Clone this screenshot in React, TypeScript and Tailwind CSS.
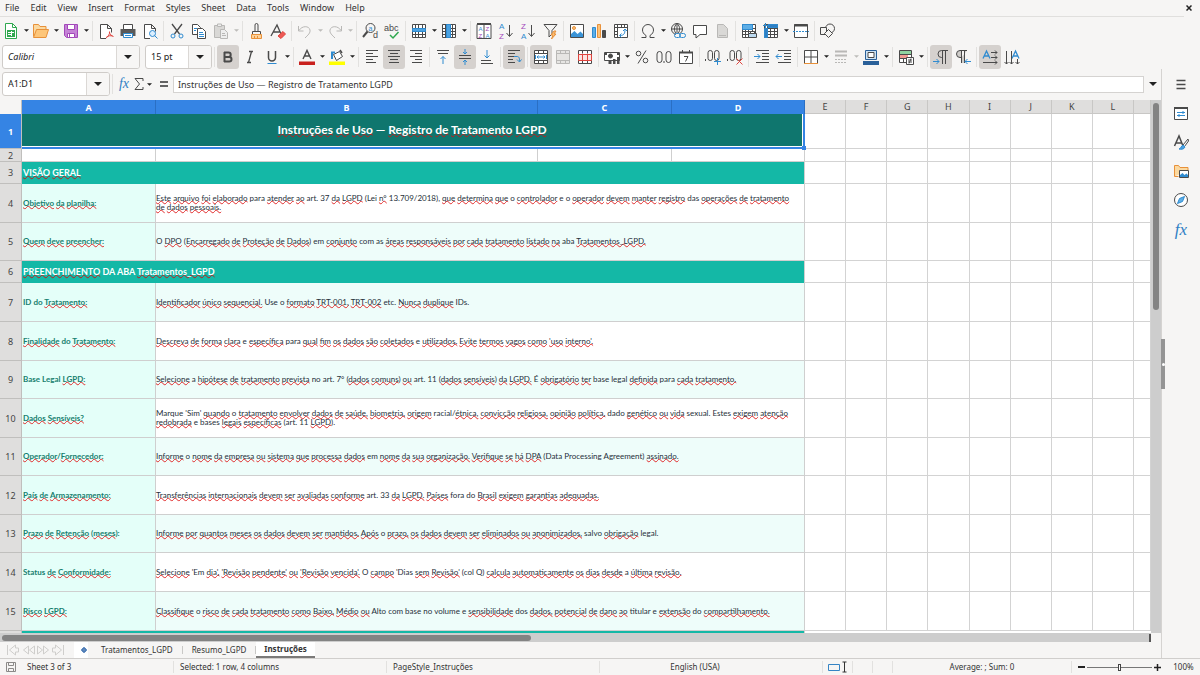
import type { ReactNode } from "react";

interface SheetRow {
  n: number;
  kind: "title" | "blank" | "section" | "entry";
  height: string;
  label?: string;
  text?: string;
  tinted?: boolean;
}

const TALL = "h-[39px]";
const SHORT = "h-[38px]";

const ROWS: SheetRow[] = [
  { n: 1, kind: "title", height: "h-[35px]", label: "Instruções de Uso — Registro de Tratamento LGPD" },
  { n: 2, kind: "blank", height: "h-[13px]" },
  { n: 3, kind: "section", height: "h-[22px]", label: "VISÃO GERAL" },
  {
    n: 4,
    kind: "entry",
    height: TALL,
    label: "Objetivo da planilha:",
    text: "Este arquivo foi elaborado para atender ao art. 37 da LGPD (Lei n° 13.709/2018), que determina que o controlador e o operador devem manter registro das operações de tratamento de dados pessoais.",
  },
  {
    n: 5,
    kind: "entry",
    height: SHORT,
    label: "Quem deve preencher:",
    text: "O DPO (Encarregado de Proteção de Dados) em conjunto com as áreas responsáveis por cada tratamento listado na aba Tratamentos_LGPD.",
    tinted: true,
  },
  { n: 6, kind: "section", height: "h-[22px]", label: "PREENCHIMENTO DA ABA Tratamentos_LGPD" },
  {
    n: 7,
    kind: "entry",
    height: TALL,
    label: "ID do Tratamento:",
    text: "Identificador único sequencial. Use o formato TRT-001, TRT-002 etc. Nunca duplique IDs.",
    tinted: true,
  },
  {
    n: 8,
    kind: "entry",
    height: TALL,
    label: "Finalidade do Tratamento:",
    text: "Descreva de forma clara e específica para qual fim os dados são coletados e utilizados. Evite termos vagos como 'uso interno'.",
  },
  {
    n: 9,
    kind: "entry",
    height: SHORT,
    label: "Base Legal LGPD:",
    text: "Selecione a hipótese de tratamento prevista no art. 7° (dados comuns) ou art. 11 (dados sensíveis) da LGPD. É obrigatório ter base legal definida para cada tratamento.",
    tinted: true,
  },
  {
    n: 10,
    kind: "entry",
    height: TALL,
    label: "Dados Sensíveis?",
    text: "Marque 'Sim' quando o tratamento envolver dados de saúde, biometria, origem racial/étnica, convicção religiosa, opinião política, dado genético ou vida sexual. Estes exigem atenção redobrada e bases legais específicas (art. 11 LGPD).",
  },
  {
    n: 11,
    kind: "entry",
    height: SHORT,
    label: "Operador/Fornecedor:",
    text: "Informe o nome da empresa ou sistema que processa dados em nome da sua organização. Verifique se há DPA (Data Processing Agreement) assinado.",
    tinted: true,
  },
  {
    n: 12,
    kind: "entry",
    height: TALL,
    label: "País de Armazenamento:",
    text: "Transferências internacionais devem ser avaliadas conforme art. 33 da LGPD. Países fora do Brasil exigem garantias adequadas.",
  },
  {
    n: 13,
    kind: "entry",
    height: SHORT,
    label: "Prazo de Retenção (meses):",
    text: "Informe por quantos meses os dados devem ser mantidos. Após o prazo, os dados devem ser eliminados ou anonimizados, salvo obrigação legal.",
    tinted: true,
  },
  {
    n: 14,
    kind: "entry",
    height: TALL,
    label: "Status de Conformidade:",
    text: "Selecione 'Em dia', 'Revisão pendente' ou 'Revisão vencida'. O campo 'Dias sem Revisão' (col Q) calcula automaticamente os dias desde a última revisão.",
  },
  {
    n: 15,
    kind: "entry",
    height: TALL,
    label: "Risco LGPD:",
    text: "Classifique o risco de cada tratamento como Baixo, Médio ou Alto com base no volume e sensibilidade dos dados, potencial de dano ao titular e extensão do compartilhamento.",
    tinted: true,
  },
];

const COLUMNS = ["A", "B", "C", "D", "E", "F", "G", "H", "I", "J", "K", "L", ""];
const MENUS = ["File", "Edit", "View", "Insert", "Format", "Styles", "Sheet", "Data", "Tools", "Window", "Help"];

// Words the English dictionary accepts; everything else gets a squiggle.
const KNOWN_WORDS = new Set(
  "para art 37 Lei 13.709/2018 o e O a em com as aba no do ID Base Legal Status Use etc IDs 7° 11 33 base legal racial dado sexual Estes bases Sim Marque Data Processing Agreement salvo Em DA ABA volume titular Alto fora das dos col Q Dias É —".split(" ")
);

function Spell({ text, onDark }: { text: string; onDark?: boolean }) {
  return (
    <>
      {text.split(/([\s()]+|\/(?=\D))/).map((part, i) => {
        const bare = part.replace(/^'|[.,:?']+$/g, "");
        if (!bare || /^[\s()/]+$/.test(bare) || KNOWN_WORDS.has(bare)) return part;
        return (
          <span
            key={i}
            className={`underline decoration-wavy decoration-1 [text-decoration-skip-ink:none] [text-underline-offset:-1px] ${
              onDark ? "decoration-[#c01c1c]" : "decoration-[#e02b2b]"
            }`}
          >
            {part}
          </span>
        );
      })}
    </>
  );
}

/* ---------- icons ---------- */

const INK = "#4a4a4a";
const BLUE = "#2f8bd0";
const PURPLE = "#a347ba";
const RED = "#e0443e";
const ORANGE = "#e8913a";
const GREEN = "#2fa84f";
const GREY = "#b9b8b6";

function Svg({ children }: { children: ReactNode }) {
  return (
    <svg viewBox="0 0 18 18" className="h-[18px] w-[18px] shrink-0" fill="none" stroke={INK} strokeWidth="1" aria-hidden="true">
      {children}
    </svg>
  );
}

function Glyph({ x, y, size, fill, children }: { x: number; y: number; size: number; fill: string; children: string }) {
  return (
    <text x={x} y={y} fontSize={size} fill={fill} stroke="none" fontFamily="Liberation Sans, sans-serif">
      {children}
    </text>
  );
}

function Lines({ rows, stroke = INK }: { rows: [number, number, number][]; stroke?: string }) {
  return <path stroke={stroke} d={rows.map(([x, y, w]) => `M${x} ${y}h${w}`).join("")} />;
}

const GRID = "M2.5 2.5h13v13h-13zM2.5 6.5h13M2.5 9.5h13M2.5 12.5h13M5.5 2.5v13M8.5 2.5v13M12.5 2.5v13";

const ICONS: Record<string, ReactNode> = {
  New: (
    <>
      <path stroke={GREEN} d="M3.5 1.5h7l4 4v11h-11z" fill="#fff" />
      <path stroke={GREEN} d="M10.5 1.5v4h4" />
      <path stroke="none" fill={GREEN} d="M5 8h8v7H5z" />
      <path stroke="#fff" d="M6 10.5h6M6 12.5h3M9.5 9v5" />
    </>
  ),
  Open: (
    <>
      <path stroke={ORANGE} fill="#fbd9a0" d="M1.5 14.5v-12h5l1.5 2h6v3" />
      <path stroke={ORANGE} fill="#fdc67a" d="M1.5 15.5L4.5 7.5h12l-2.5 8z" />
    </>
  ),
  Save: (
    <>
      <path stroke={PURPLE} fill="#c583d6" d="M2.5 2.5h13v13h-11l-2-2z" />
      <path stroke={PURPLE} fill="#fff" d="M5.5 2.5h7v5h-7zM5.5 11.5h7v4h-7z" />
      <path stroke={PURPLE} d="M7.5 12v3" />
    </>
  ),
  "Export as PDF": (
    <>
      <path fill="#fff" d="M9 16.5H3.5v-14h7l4 4v4M10.5 2.5v4h4" />
      <path stroke={RED} d="M9 16c2-1 4-4 3.5-6.5M12.5 10c0 2 2 4 4 4.5M9.5 15c2-1.5 4-1.5 6-1" />
    </>
  ),
  Print: (
    <>
      <path stroke="none" fill="#5a5a5a" d="M1.5 7h15v7h-15z" />
      <path fill="#fff" d="M4.5 7.5v-5h9v5z" />
      <path stroke={BLUE} fill="#fff" d="M4.5 11.5h9v4h-9z" />
      <path stroke={BLUE} d="M6 13.5h6" />
    </>
  ),
  "Print Preview": (
    <>
      <path fill="#fff" d="M9 16.5H3.5v-14h7l4 4v3M10.5 2.5v4h4" />
      <circle cx="11.5" cy="11.5" r="3" stroke={BLUE} fill="#dcefff" />
      <path stroke={BLUE} d="M13.5 13.5l3 3" />
    </>
  ),
  Cut: (
    <>
      <path strokeWidth="1.3" d="M4 2l7.5 10M14 2L6.5 12" />
      <circle cx="5" cy="14" r="2" stroke={BLUE} />
      <circle cx="13" cy="14" r="2" stroke={BLUE} />
    </>
  ),
  Copy: (
    <>
      <path fill="#fff" d="M2.5 2.5h5l3 3v7h-8z" />
      <path fill="#fff" d="M7.5 6.5h5l3 3v7h-8z" />
      <path stroke={BLUE} d="M4 6.5h3M4 8.5h2M9 10.5h4M9 12.5h5M9 14.5h5" />
    </>
  ),
  Paste: (
    <>
      <path stroke={GREY} fill="#d9d8d6" d="M2.5 3.5h10v12h-10z" />
      <path stroke={GREY} fill="#eee" d="M5.5 2h4v2.5h-4zM8.5 7.5h4l3 3v6h-7z" />
      <path stroke={GREY} d="M10 11.5h3M10 13.5h4" />
    </>
  ),
  "Clone Formatting": (
    <>
      <path d="M8 9V3a1.5 1.5 0 0 1 3 0v6M5.5 12.5v-3h8v3" />
      <path stroke={ORANGE} fill="#fdd29a" d="M4.5 12.5h10v4h-10z" />
      <path stroke={ORANGE} d="M7.5 14v2M10.5 14v2" />
    </>
  ),
  "Clear Direct Formatting": (
    <>
      <path strokeWidth="1.3" d="M2 14L8 3l4 9M4.5 10h6" />
      <path stroke={RED} fill="#ee5a55" d="M9 14l5-4.5 2.5 2.5-4.5 4.5z" />
    </>
  ),
  Undo: <path stroke={GREY} d="M2.5 4v5h5M3 8.5C6 3.5 13 3.5 14 8c.5 3-2 5-5 8" />,
  Redo: <path stroke={GREY} d="M15.5 4v5h-5M15 8.5C12 3.5 5 3.5 4 8c-.5 3 2 5 5 8" />,
  "Find and Replace": (
    <>
      <circle cx="9.5" cy="6" r="4.5" />
      <path strokeWidth="2" d="M6.5 9.5L2 15" />
      <Glyph x={7.5} y={8.5} size={7} fill={BLUE}>a</Glyph>
      <Glyph x={12} y={16} size={9} fill={INK}>d</Glyph>
    </>
  ),
  Spelling: (
    <>
      <Glyph x={1} y={9} size={9} fill={INK}>abc</Glyph>
      <path stroke={GREEN} strokeWidth="1.5" d="M7 13l3 3 5.5-6" />
    </>
  ),
  Row: (
    <>
      <path fill="#fff" d={GRID} />
      <path stroke={BLUE} fill="#4ba3e3" d="M2.5 6.5h13v3h-13z" />
    </>
  ),
  Column: (
    <>
      <path fill="#fff" d={GRID} />
      <path stroke={BLUE} fill="#4ba3e3" d="M6.5 2.5h4v13h-4z" />
    </>
  ),
  Sort: (
    <>
      <path fill="#fff" d="M2 2.5h14v14H2zM9 2.5v14" />
      <path strokeWidth="2" d="M2 2h14" />
      <Glyph x={3.5} y={9} size={6} fill={BLUE}>A</Glyph>
      <Glyph x={3.5} y={16} size={6} fill={PURPLE}>Z</Glyph>
      <Glyph x={10.5} y={9} size={6} fill={PURPLE}>Z</Glyph>
      <Glyph x={10.5} y={16} size={6} fill={BLUE}>A</Glyph>
    </>
  ),
  "Sort Ascending": (
    <>
      <Glyph x={2} y={7} size={8} fill={BLUE}>A</Glyph>
      <Glyph x={2} y={17} size={8} fill={PURPLE}>Z</Glyph>
      <path d="M12.5 3v11M9.5 11l3 3.5 3-3.5" />
    </>
  ),
  "Sort Descending": (
    <>
      <Glyph x={2} y={7} size={8} fill={PURPLE}>Z</Glyph>
      <Glyph x={2} y={17} size={8} fill={BLUE}>A</Glyph>
      <path d="M12.5 3v11M9.5 11l3 3.5 3-3.5" />
    </>
  ),
  AutoFilter: (
    <>
      <path d="M3 2.5h13l-5 6V12l-3 3V8.5z" />
      <path stroke={ORANGE} fill="#fbc27a" d="M13 9l-3 4h2l-1.5 4 4.5-5h-2l2-3z" />
    </>
  ),
  Image: (
    <>
      <path fill="#fff" d="M2.5 2.5h13v13h-13z" />
      <path stroke="none" fill="#3a93d6" d="M3 15v-3l3.5-3 3 3 3-2.5L15 12v3z" />
      <circle cx="6" cy="6" r="1.5" stroke={ORANGE} fill="#fbc27a" />
    </>
  ),
  Chart: (
    <>
      <path stroke={BLUE} fill="#5eaee6" d="M2.5 5.5h3v10h-3z" />
      <path stroke={ORANGE} fill="#fbc27a" d="M7.5 2.5h3v13h-3z" />
      <path fill={INK} d="M12.5 8.5h3v7h-3z" />
    </>
  ),
  "Pivot Table": (
    <>
      <path fill="#fff" d="M2.5 2.5h13v13h-13zM2.5 5.5h13M5.5 2.5v13M9.5 2.5v3M12.5 2.5v3M2.5 9.5h3M2.5 12.5h3" />
      <path stroke={BLUE} d="M8 13.5c4 0 5-2 5-6M11 9l2-2 2 2M9.5 11.5l-2 2 2 2" />
    </>
  ),
  "Special Character": <path d="M2.5 15.5H7v-2C4.5 12 3.5 10 3.5 8a5.5 5.5 0 0 1 11 0c0 2-1 4-3.5 5.5v2h4.5" />,
  Hyperlink: (
    <>
      <circle cx="8" cy="7" r="5.5" />
      <path d="M2.5 7h11M8 1.5v11M8 1.5c-3.5 3-3.5 8 0 11M8 1.5c3.5 3 3.5 8 0 11" />
      <path stroke="#f5f4f2" strokeWidth="4" d="M7 13.5h10" />
      <rect x="5.5" y="11.5" width="6" height="4" rx="2" stroke={BLUE} />
      <rect x="10.5" y="11.5" width="6" height="4" rx="2" stroke={BLUE} />
    </>
  ),
  Comment: <path fill="#fff" d="M2.5 3.5h13v9H9l-4 3.5v-3.5H2.5z" />,
  "Headers and Footers": (
    <>
      <path stroke={GREY} fill="#d9d8d6" d="M4.5 2.5h6l4 4v9h-10z" />
      <path stroke={GREY} d="M6 13.5h7" />
    </>
  ),
  "Print Area": (
    <>
      <path fill="#fff" d={GRID} />
      <path stroke={BLUE} fill="#5eaee6" d="M2.5 2.5h10v5h-10z" />
      <path fill="#bcd9ef" d="M8.5 11.5h8v4h-8z" />
      <path d="M10.5 9.5h4v2h-4z" fill="#fff" />
    </>
  ),
  "Freeze Rows and Columns": (
    <>
      <path fill="#fff" d={GRID} />
      <path stroke={BLUE} fill="#2f7fc4" d="M2.5 6.5h3v9h-3zM6 2.5h9.5v3H6z" />
      <path stroke={BLUE} d="M1 3.5h5M3.5 1v5" />
    </>
  ),
  "Split Window": (
    <>
      <path fill="#fff" d="M2.5 2.5h13v13h-13z" />
      <path strokeWidth="2" d="M2 3.5h14" />
      <path stroke={BLUE} strokeDasharray="2 1" d="M1 9.5h16" />
    </>
  ),
  "Draw Functions": (
    <>
      <circle cx="11" cy="6.5" r="4.5" />
      <path fill="#f5f4f2" d="M1.5 5.5h6v7h-6z" />
      <path fill="#f5f4f2" d="M9.500 7.500l4 4-4 4-4-4z" />
    </>
  ),
  Bold: <path strokeWidth="2" d="M5.500 4v10M5 4.500h4.500a2.200 2.200 0 0 1 0 4.400H6M6 9h4.200a2.300 2.300 0 0 1 0 4.600H5" />,
  Italic: <path d="M8 3.500h4M6 14.500h4M10.500 3.500l-3 11" strokeWidth="1.300" />,
  Underline: (
    <>
      <path strokeWidth="1.500" d="M5.500 3v6.500a3.500 3.500 0 0 0 7 0V3" />
      <path stroke={BLUE} d="M4.500 15.500h9" />
    </>
  ),
  "Font Color": (
    <>
      <path strokeWidth="1.400" d="M5 11L9 2.500 13 11M6.500 8h5" />
      <path stroke="none" fill="#c9211e" d="M1 13.500h16V17H1z" />
    </>
  ),
  "Background Color": (
    <>
      <path fill="#fff" d="M5.500 6.500l6-3 3 5-6 4z" />
      <path stroke={BLUE} strokeWidth="2" d="M4 11V4.500h3" />
      <path strokeWidth="1.500" d="M12 2l2 3" />
      <path stroke="none" fill="#ffff00" d="M1 13.500h16V17H1z" />
    </>
  ),
  "Align Left": <Lines rows={[[3, 2.5, 12], [3, 5.5, 7], [3, 8.5, 12], [3, 11.5, 7], [3, 14.5, 10]]} />,
  "Center Horizontally": <Lines rows={[[3, 2.5, 12], [5, 5.5, 8], [3, 8.5, 12], [5, 11.5, 8], [4, 14.5, 10]]} />,
  "Align Right": <Lines rows={[[3, 2.5, 12], [8, 5.5, 7], [3, 8.5, 12], [8, 11.5, 7], [5, 14.5, 10]]} />,
  "Align Top": (
    <>
      <Lines rows={[[3, 2.5, 12], [4, 5.5, 10]]} />
      <path stroke={BLUE} d="M9 16V8.500M6.500 11L9 8.500l2.500 2.500" />
    </>
  ),
  "Center Vertically": (
    <>
      <Lines rows={[[3, 7.5, 12], [3, 10.5, 12]]} />
      <path stroke={BLUE} d="M9 1v5M7 4l2 2 2-2M9 17v-5M7 14l2-2 2 2" />
    </>
  ),
  "Align Bottom": (
    <>
      <Lines rows={[[3, 12.5, 10], [3, 15.5, 12]]} />
      <path stroke={BLUE} d="M9 2v8M6.500 7.500L9 10l2.500-2.500" />
    </>
  ),
  "Wrap Text": (
    <>
      <Lines rows={[[3, 2.5, 12], [3, 5.5, 7], [3, 8.5, 6], [3, 11.5, 5], [3, 14.5, 7]]} />
      <path stroke={BLUE} d="M9 8.500h3c2 0 2.500 1 2.500 5M12 11.500l2.500 2.500 2-2.500" />
    </>
  ),
  "Merge and Center Cells": (
    <>
      <path fill="#fff" d="M2.500 2.500h13v13h-13zM2.500 5.500h13M2.500 12.500h13M6.500 2.500v3M11.500 2.500v3M6.500 12.500v3M11.500 12.500v3" />
      <path stroke={BLUE} d="M3.500 7v4M14.500 7v4M5 9h8M6.500 7.500L5 9l1.500 1.500M11.500 7.500L13 9l-1.500 1.500" />
    </>
  ),
  "Merge Cells": <path stroke={GREY} fill="#e6e5e3" d="M2.500 2.500h13v13h-13zM2.500 5.500h13M2.500 12.500h13M6.500 2.500v3M11.500 2.500v3M6.500 12.500v3M11.500 12.500v3" />,
  "Unmerge Cells": (
    <>
      <path fill="#fff" d="M2.500 2.500h13v13h-13zM6.500 2.500v3M11.500 2.500v3M6.500 12.500v3M11.500 12.500v3" />
      <path stroke={RED} fill="#fbe3e2" d="M2.500 6.500h13v6h-13zM6.500 6.500v6M11.500 6.500v6" />
    </>
  ),
  Currency: (
    <>
      <path fill="#fff" d="M1.500 4.500h15v8h-15z" />
      <circle cx="7.500" cy="8" r="2" fill={INK} />
      <path stroke="none" fill={INK} d="M2 5h2v2H2zM14 5h2v2h-2zM5.500 12h3v4h-3zM10 11h2.500v5H10zM14 9h2.500v7H14z" />
    </>
  ),
  Percent: (
    <>
      <circle cx="5.500" cy="5.500" r="2.300" />
      <circle cx="12.500" cy="12.500" r="2.300" />
      <path d="M13 2.500l-8 13" />
    </>
  ),
  Number: (
    <>
      <rect x="2" y="3.500" width="5" height="11" rx="2.500" />
      <rect x="11" y="3.500" width="5" height="11" rx="2.500" />
      <path d="M9 13v2" />
    </>
  ),
  Date: (
    <>
      <path fill="#fff" d="M2.500 4.500h13v11h-13z" />
      <path strokeWidth="2" d="M2 4.500h14" />
      <path d="M5.500 2v2M12.500 2v2M7 8.500h4l-2.500 5" />
    </>
  ),
  "Add Decimal Place": (
    <>
      <rect x="4" y="2.500" width="4.500" height="10" rx="2.200" />
      <rect x="10.500" y="2.500" width="4.500" height="10" rx="2.200" />
      <path d="M1.500 11v2" />
      <path stroke={BLUE} d="M10 13.500h7M13.500 10v7" />
    </>
  ),
  "Delete Decimal Place": (
    <>
      <rect x="4" y="2.500" width="4.500" height="10" rx="2.200" />
      <rect x="10.500" y="2.500" width="4.500" height="10" rx="2.200" />
      <path d="M1.500 11v2" />
      <path stroke={RED} d="M10.500 10.500l6 6M16.500 10.500l-6 6" />
    </>
  ),
  "Increase Indent": (
    <>
      <Lines rows={[[3, 2.5, 13], [9, 5.5, 7], [9, 8.5, 7], [9, 11.5, 7], [3, 14.5, 13]]} />
      <path stroke={BLUE} d="M1 8.500h6M4.500 6L7 8.500 4.500 11" />
    </>
  ),
  "Decrease Indent": (
    <>
      <Lines rows={[[3, 2.5, 13], [9, 5.5, 7], [9, 8.5, 7], [9, 11.5, 7], [3, 14.5, 13]]} />
      <path stroke={BLUE} d="M1 8.500h6M3.500 6L1 8.500 3.500 11" />
    </>
  ),
  Borders: (
    <>
      <path fill="#fff" d="M2.500 2.500h13v13h-13zM9 2.500v13M2.500 9h13" />
      <path stroke={ORANGE} d="M2 15.500h14" />
    </>
  ),
  "Border Style": (
    <>
      <path stroke={GREY} d="M3 3.500h12M3 7.500h12" strokeWidth="2" />
      <path stroke={GREY} strokeDasharray="2 1" d="M3 11.500h12M3 14.500h12" />
    </>
  ),
  "Border Color": (
    <>
      <path stroke="#2a6099" fill="#cfe4f5" d="M3.500 2.500h11v9h-11z" />
      <path fill="#fff" d="M6 4.500h6v5H6z" />
      <path stroke="none" fill="#2a6099" d="M1 13h16v4H1z" />
    </>
  ),
  Conditional: (
    <>
      <path fill="#fff" d="M2.500 2.500h12v12h-12zM2.500 6.500h12M2.500 10.500h12M6.500 2.500v12" />
      <path stroke="none" fill="#8fd3a0" d="M3 3h11v3H3z" />
      <path stroke="none" fill="#f09a92" d="M3 7h8v3H3z" />
      <path fill="#fff" d="M9.500 9.500h7v7h-7z" />
      <path d="M11 12h4M11 14h4M14 10.500l-2 5" />
    </>
  ),
  "Left-To-Right": (
    <>
      <path d="M10.500 16V2.500M13.500 16V2.500M16 2.500H9.500a3.500 3.500 0 0 0 0 7h1" />
      <path stroke={BLUE} d="M1 13.500h6M4.500 11L7 13.500 4.500 16" />
    </>
  ),
  "Right-To-Left": (
    <>
      <path fill="#cfcdca" d="M7.500 15V2.500h3V15M13 2.500H6a3.500 3.500 0 0 0 0 7h1.500" />
      <path stroke={BLUE} d="M11 13.500h6M13.500 11L11 13.500l2.500 2.500" />
    </>
  ),
  "Text Direction Horizontal": (
    <>
      <path stroke={BLUE} strokeWidth="1.300" d="M2 10.500L5.500 3 9 10.500M3.500 8h4" />
      <path d="M10 4.500h6M14 2.500l2 2-2 2M10 9.500h6M14 7.500l2 2-2 2M2 14.500h14M14 12.500l2 2-2 2" />
    </>
  ),
  "Text Direction Vertical": (
    <>
      <path stroke={BLUE} strokeWidth="1.300" d="M9 10.500L12.500 3 16 10.500M10.500 8h4" />
      <path d="M3.500 3v13M1.500 14l2 2 2-2M8.500 3v13M6.500 14l2 2 2-2M14.500 11v5M12.500 14l2 2 2-2" />
    </>
  ),
};

interface Tool {
  name: string;
  caret?: boolean;
  pressed?: boolean;
  disabled?: boolean;
}

const STANDARD: Tool[][] = [
  [{ name: "New", caret: true }, { name: "Open", caret: true }, { name: "Save", caret: true }],
  [{ name: "Export as PDF" }, { name: "Print" }, { name: "Print Preview" }],
  [{ name: "Cut" }, { name: "Copy" }, { name: "Paste", caret: true, disabled: true }],
  [{ name: "Clone Formatting" }, { name: "Clear Direct Formatting" }],
  [{ name: "Undo", caret: true, disabled: true }, { name: "Redo", caret: true, disabled: true }],
  [{ name: "Find and Replace" }, { name: "Spelling" }],
  [{ name: "Row", caret: true }, { name: "Column", caret: true }],
  [{ name: "Sort" }, { name: "Sort Ascending" }, { name: "Sort Descending" }, { name: "AutoFilter" }],
  [{ name: "Image" }, { name: "Chart" }, { name: "Pivot Table" }],
  [{ name: "Special Character", caret: true }, { name: "Hyperlink" }, { name: "Comment" }, { name: "Headers and Footers", disabled: true }],
  [{ name: "Print Area" }, { name: "Freeze Rows and Columns", caret: true }, { name: "Split Window" }],
  [{ name: "Draw Functions" }],
];

const FORMATTING: Tool[][] = [
  [{ name: "Bold", pressed: true }, { name: "Italic" }, { name: "Underline", caret: true }],
  [{ name: "Font Color", caret: true }, { name: "Background Color", caret: true }],
  [{ name: "Align Left" }, { name: "Center Horizontally", pressed: true }, { name: "Align Right" }],
  [{ name: "Align Top" }, { name: "Center Vertically", pressed: true }, { name: "Align Bottom" }],
  [{ name: "Wrap Text", pressed: true }],
  [{ name: "Merge and Center Cells", pressed: true }, { name: "Merge Cells", disabled: true }, { name: "Unmerge Cells" }],
  [{ name: "Currency", caret: true }, { name: "Percent" }, { name: "Number" }, { name: "Date" }],
  [{ name: "Add Decimal Place" }, { name: "Delete Decimal Place" }],
  [{ name: "Increase Indent" }, { name: "Decrease Indent" }],
  [{ name: "Borders", caret: true }, { name: "Border Style", caret: true, disabled: true }, { name: "Border Color", caret: true }],
  [{ name: "Conditional", caret: true }],
  [{ name: "Left-To-Right", pressed: true }, { name: "Right-To-Left" }],
  [{ name: "Text Direction Horizontal", pressed: true }, { name: "Text Direction Vertical" }],
];

function Caret({ big, muted }: { big?: boolean; muted?: boolean }) {
  return (
    <svg viewBox="0 0 8 4" className={big ? "h-1 w-2" : "h-[3px] w-[5px]"} aria-hidden="true">
      <path d="M0 0h8L4 4z" fill={muted ? "#bdbcba" : "#222"} />
    </svg>
  );
}

function ToolGroups({ groups }: { groups: Tool[][] }) {
  return (
    <>
      {groups.map((tools, g) => (
        <div key={g} className="flex shrink-0 items-center">
          {g > 0 && (
            <span className="flex w-[5px] justify-center">
              <span className="h-5 w-px bg-[#e2e1df]" />
            </span>
          )}
          {tools.map((t) => (
            <div key={t.name} className="flex items-center">
              <button
                type="button"
                aria-label={t.name}
                disabled={t.disabled}
                className={`flex h-6 w-[22px] items-center justify-center rounded-[3px] ${t.pressed ? "bg-[#d5d1ce]" : ""}`}
              >
                <Svg>{ICONS[t.name]}</Svg>
              </button>
              {t.caret && (
                <button type="button" aria-label={`${t.name} options`} disabled={t.disabled} className="flex h-6 w-2 items-center justify-center">
                  <Caret muted={t.disabled} />
                </button>
              )}
            </div>
          ))}
        </div>
      ))}
    </>
  );
}

function Combo({ label, value, width, italic }: { label: string; value: string; width: string; italic?: boolean }) {
  return (
    <div className={`flex h-6 shrink-0 overflow-hidden rounded-[3px] border border-[#cfccc9] bg-white ${width}`}>
      <input
        aria-label={label}
        defaultValue={value}
        className={`min-w-0 flex-1 bg-transparent px-[5px] text-[9px] text-[#222] outline-none ${italic ? "italic" : ""}`}
      />
      <button type="button" aria-label={`${label} list`} className="flex w-[23px] items-center justify-center border-l border-[#dbd8d5] bg-[#f7f6f5]">
        <Caret big />
      </button>
    </div>
  );
}

/* ---------- sheet ---------- */

function RowCells({ row }: { row: SheetRow }) {
  const line = "border-r border-b border-[#cfcfcf]";
  if (row.kind === "title") {
    return (
      <td colSpan={4} className="relative border-r-2 border-b-2 border-[#3584e4] bg-white p-0">
        <div className="mr-px mb-px flex h-8 items-center justify-center bg-[#0f766e] font-[Lato] text-[12px] font-bold text-white">
          <span>
            <Spell text={row.label ?? ""} onDark />
          </span>
        </div>
        <span className="absolute -right-[3px] -bottom-[3px] h-1 w-1 bg-[#3584e4]" />
      </td>
    );
  }
  if (row.kind === "section") {
    return (
      <td colSpan={4} className="border-r border-[#cfcfcf] bg-[#14b8a6] p-0 pl-px text-left font-[Lato] text-[9px] leading-3 font-bold text-white">
        <Spell text={row.label ?? ""} onDark />
      </td>
    );
  }
  if (row.kind === "blank") {
    return (
      <>
        {["A", "B", "C", "D"].map((c) => (
          <td key={c} className={`p-0 ${line}`} />
        ))}
      </>
    );
  }
  return (
    <>
      <td className={`bg-[#e4fff9] p-0 pl-px font-[Lato] text-[8px] leading-[9px] font-bold whitespace-nowrap text-[#17806f] ${line}`}>
        <Spell text={row.label ?? ""} />
      </td>
      <td colSpan={3} className={`p-0 pr-2 font-[Lato] text-[8px] leading-[9px] text-[#26303a] ${line} ${row.tinted ? "bg-[#eefdfa]" : "bg-white"}`}>
        <Spell text={row.text ?? ""} />
      </td>
    </>
  );
}

function Sheet() {
  return (
    <div className="min-h-0 min-w-0 flex-1 overflow-hidden bg-white">
      <table className="w-full table-fixed border-separate border-spacing-0">
        <colgroup>
          <col className="w-[22px]" />
          <col className="w-[134px]" />
          <col className="w-[382px]" />
          <col className="w-[134px]" />
          <col className="w-[133px]" />
          {COLUMNS.slice(4, 12).map((c) => (
            <col key={c} />
          ))}
          <col className="w-[17px]" />
        </colgroup>
        <thead>
          <tr className="h-[14px] text-[9px] leading-none">
            <th aria-label="Select all" className="border-r border-[#c0bfbd] bg-[#f6f5f4] p-0" />
            {COLUMNS.map((c, i) => (
              <th
                key={i}
                scope="col"
                className={`border-r p-0 ${
                  i < 4 ? "border-[#2a6fc4] bg-[#3584e4] font-bold text-white" : "border-b border-[#c8c7c5] bg-[#dfdedd] font-normal text-[#444]"
                }`}
              >
                {c}
              </th>
            ))}
          </tr>
        </thead>
        <tbody>
          {ROWS.map((row) => (
            <tr key={row.n} className={row.height}>
              <th
                scope="row"
                className={`border-r border-b border-[#c0bfbd] p-0 text-[9px] leading-none ${
                  row.n === 1 ? "bg-[#3584e4] font-bold text-white" : "bg-[#dfdedd] font-normal text-[#444]"
                }`}
              >
                {row.n}
              </th>
              <RowCells row={row} />
              {COLUMNS.slice(4).map((c, i) => (
                <td key={i} className="border-r border-b border-[#d3d3d3] p-0" />
              ))}
            </tr>
          ))}
          <tr>
            <th aria-label="16" className="h-2 border-r border-[#c0bfbd] bg-[#dfdedd]" />
            <td colSpan={4} className="border-r border-[#cfcfcf] bg-[#14b8a6]" />
            <td colSpan={9} />
          </tr>
        </tbody>
      </table>
    </div>
  );
}

function FormulaBar() {
  return (
    <div className="flex h-[31px] shrink-0 items-center pb-px pl-[2px]">
      <Combo label="Name Box" value="A1:D1" width="w-[108px]" />
      <span className="mx-[2px] h-5 w-px bg-[#e2e1df]" />
      <button type="button" aria-label="Function Wizard" className="w-[18px] text-center font-['Liberation_Serif'] text-[14px] leading-none text-[#2f7fc4] italic">
        fx
      </button>
      <button type="button" aria-label="Select Function" className="flex w-[22px] items-center gap-[3px] pl-[1px]">
        <svg viewBox="0 0 10 12" className="h-3 w-[10px]" fill="none" stroke={INK} aria-hidden="true">
          <path d="M9 3V.5H1L5.500 6 1 11.500h8V9" />
        </svg>
        <Caret />
      </button>
      <button type="button" aria-label="Formula" className="flex w-[18px] justify-center">
        <svg viewBox="0 0 8 6" className="h-[6px] w-2" stroke="#333" strokeWidth="1.500" aria-hidden="true">
          <path d="M0 1h8M0 5h8" />
        </svg>
      </button>
      <input
        aria-label="Input line"
        defaultValue="Instruções de Uso — Registro de Tratamento LGPD"
        className="h-[17px] min-w-0 flex-1 border border-[#d5d3d1] bg-white px-1 text-[9px] text-[#333] outline-none"
      />
      <button type="button" aria-label="Expand Formula Bar" className="flex w-[17px] items-center justify-center">
        <Caret big />
      </button>
    </div>
  );
}

function SheetTabs() {
  return (
    <div className="flex h-4 shrink-0 items-stretch text-[8px] text-[#333]">
      <div className="flex items-center pl-[6px]">
        {["M1 1v10M9 1L3 6l6 5V8h3V4H9z", "M7 2L2 6l5 4V2zM13 2L8 6l5 4z", "M7 2l5 4-5 4zM1 2l5 4-5 4z", "M12 1v10M4 1l6 5-6 5V8H1V4h3z"].map((d, i) => (
          <button key={d} type="button" aria-label={["First sheet", "Previous sheet", "Next sheet", "Last sheet"][i]} disabled>
            <svg viewBox="0 0 14 12" className="h-3 w-[15px]" fill="none" stroke="#cfcecc" aria-hidden="true">
              <path d={d} />
            </svg>
          </button>
        ))}
      </div>
      <button type="button" aria-label="Add sheet" className="ml-2 flex w-[14px] items-center justify-end bg-white">
        <svg viewBox="0 0 8 8" className="h-2 w-2" fill="none" stroke="#2a62a8" aria-hidden="true">
          <circle cx="4" cy="4" r="2" fill="#fff" />
          <path d="M4 1v6M1 4h6" />
        </svg>
      </button>
      <button type="button" className="ml-1 px-[9px]">Tratamentos_LGPD</button>
      <span className="my-1 w-px bg-[#c9c8c6]" />
      <button type="button" className="px-[9px]">Resumo_LGPD</button>
      <span className="my-1 w-px bg-[#c9c8c6]" />
      <button type="button" className="border-b-2 border-[#7b7a79] bg-white px-2 font-bold">Instruções</button>
    </div>
  );
}

function Sidebar() {
  const panels: [string, ReactNode][] = [
    ["Sidebar Settings", <path key="a" strokeWidth="1.500" d="M4.500 5.500h9M4.500 9.500h9M4.500 13.500h9" />],
    [
      "Properties",
      <g key="b">
        <path fill="#fff" d="M2.500 3.500h13v12h-13z" />
        <path strokeWidth="2" d="M2 4h14" />
        <path stroke={BLUE} d="M5 8.500h8M5 11.500h8M11 7v3M7 10v3" />
      </g>,
    ],
    [
      "Styles",
      <g key="c">
        <path strokeWidth="1.500" d="M2.500 13L7 3l4 10M4 10h6" />
        <path d="M16 6l-5 6 1.500 1.500L16.500 8z" fill="#fff" />
        <path stroke={BLUE} fill="#4ba3e3" d="M11 12l2 2c-1 2.500-4 2.500-6 2 2-.5 2-3 4-4z" />
      </g>,
    ],
    [
      "Gallery",
      <g key="d">
        <path stroke={ORANGE} fill="#fbd9a0" d="M2.500 14.500v-11h4l1.500 2h8v3M2.500 14.500h4" />
        <path fill="#fff" d="M7.500 8.500h9v7h-9z" />
        <path stroke="none" fill={BLUE} d="M8 15v-2l2.500-2 2 2 2-1.500 1.500 1.500v2z" />
      </g>,
    ],
    [
      "Navigator",
      <g key="e">
        <circle cx="9" cy="9" r="6.500" fill="#fff" />
        <path stroke={BLUE} fill="#5eaee6" d="M12.500 5.500L10.500 10.500 5.500 12.500 7.500 7.500z" />
      </g>,
    ],
  ];
  return (
    <aside className="relative flex w-[39px] shrink-0 flex-col items-center gap-[7px] border-l border-[#d5d3d1] pt-1">
      {panels.map(([name, art]) => (
        <button key={name} type="button" aria-label={name} className="flex h-[22px] w-[22px] items-center justify-center">
          <Svg>{art}</Svg>
        </button>
      ))}
      <button type="button" aria-label="Functions" className="h-[22px] font-['Liberation_Serif'] text-[17px] leading-none text-[#2f7fc4] italic">
        fx
      </button>
      <button type="button" aria-label="Hide sidebar" className="absolute top-[270px] -left-px flex h-[50px] w-1 items-center justify-center bg-[#949494]">
        <span className="h-[3px] w-[3px] rounded-full bg-white" />
      </button>
    </aside>
  );
}

function StatusBar() {
  const sep = "border-l border-[#e2e1df]";
  return (
    <footer className="flex h-[17px] shrink-0 items-center border-t border-[#d0cecc] text-[8px] text-[#333]">
      <span className="flex w-[22px] justify-center">
        <svg viewBox="0 0 12 12" className="h-3 w-3" fill="none" stroke="#8b8a88" role="img" aria-label="Document not modified">
          <path d="M1.500 1.500h9v9h-9zM3.500 1.500v3h5v-3M3.500 10.500v-3h5v3" />
        </svg>
      </span>
      <span className="w-[151px] pl-[5px]">Sheet 3 of 3</span>
      <span className={`w-[213px] pl-[6px] ${sep}`}>Selected: 1 row, 4 columns</span>
      <span className={`w-[213px] pl-[6px] ${sep}`}>PageStyle_Instruções</span>
      <span className={`flex-1 pr-8 text-center ${sep}`}>English (USA)</span>
      <span className={`flex w-[30px] justify-center ${sep}`}>
        <svg viewBox="0 0 20 12" className="h-3 w-5" fill="none" aria-hidden="true">
          <path stroke="#3584c4" d="M.5 3.500h11v6H.500z" />
          <path stroke="#333" d="M14.500 1h4M14.500 11h4M16.500 1v10" />
        </svg>
      </span>
      <span className={`h-3 w-5 ${sep}`} />
      <span className={`h-3 w-5 ${sep}`} />
      <span className={`w-[179px] text-center ${sep}`}>Average: ; Sum: 0</span>
      <div className={`flex w-[96px] items-center justify-between px-[6px] ${sep}`}>
        <button type="button" aria-label="Zoom Out" className="h-[2px] w-[7px] bg-[#222]" />
        <input
          type="range"
          aria-label="Zoom"
          defaultValue={50}
          className="h-3 w-[65px] appearance-none bg-transparent [&::-webkit-slider-runnable-track]:h-px [&::-webkit-slider-runnable-track]:bg-[#777] [&::-webkit-slider-thumb]:-mt-[3px] [&::-webkit-slider-thumb]:h-[7px] [&::-webkit-slider-thumb]:w-[3px] [&::-webkit-slider-thumb]:appearance-none [&::-webkit-slider-thumb]:border [&::-webkit-slider-thumb]:border-[#444] [&::-webkit-slider-thumb]:bg-white"
        />
        <button type="button" aria-label="Zoom In">
          <svg viewBox="0 0 7 7" className="h-[7px] w-[7px]" stroke="#222" strokeWidth="1.500" aria-hidden="true">
            <path d="M0 3.500h7M3.500 0v7" />
          </svg>
        </button>
      </div>
      <span className="w-[33px] text-center">100%</span>
    </footer>
  );
}

export default function App() {
  return (
    <div className="flex h-screen flex-col overflow-hidden bg-[#f6f5f4] font-['Noto_Sans',sans-serif] text-[#333]">
      <nav className="mr-4 flex h-[17px] shrink-0 items-center gap-px border-b border-[#e0dfdd] text-[9px]">
        {MENUS.map((m) => (
          <button key={m} type="button" className="px-[5px]">
            {m}
          </button>
        ))}
        <button type="button" aria-label="Close" className="-mr-2 ml-auto">
          <svg viewBox="0 0 6 6" className="h-[6px] w-[6px]" stroke="#222" strokeWidth="1.500" aria-hidden="true">
            <path d="M.5 .5l5 5M5.500 .5l-5 5" />
          </svg>
        </button>
      </nav>

      <div role="toolbar" aria-label="Standard" className="flex h-[27px] shrink-0 items-center">
        <ToolGroups groups={STANDARD} />
      </div>

      <div role="toolbar" aria-label="Formatting" className="flex h-[25px] shrink-0 items-center pl-[2px]">
        <Combo label="Font Name" value="Calibri" width="w-[138px]" italic />
        <span className="w-[5px]" />
        <Combo label="Font Size" value="15 pt" width="w-[67px]" />
        <span className="mx-[2px] h-5 w-px bg-[#e2e1df]" />
        <ToolGroups groups={FORMATTING} />
      </div>

      <div className="flex min-h-0 flex-1">
        <main className="flex min-w-0 flex-1 flex-col">
          <FormulaBar />
          <div className="flex min-h-0 flex-1">
            <Sheet />
            <div className="w-[10px] shrink-0 bg-[#cdcdcd] px-[2px] pt-[3px]">
              <div className="h-[39%] rounded-full bg-[#838383]" />
            </div>
          </div>
          <div className="mr-[10px] flex h-[9px] shrink-0 items-center justify-between bg-[#cdcdcd] pl-[2px]">
            <div className="h-[6px] w-[46%] rounded-full bg-[#838383]" />
            <span className="h-2 w-[2px] bg-[#555]" />
          </div>
          <SheetTabs />
        </main>
        <Sidebar />
      </div>
      <StatusBar />
    </div>
  );
}
